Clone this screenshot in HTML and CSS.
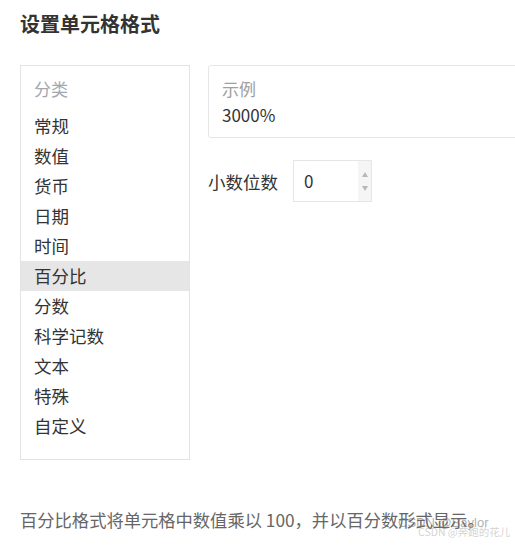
FILE: index.html
```html
<!DOCTYPE html>
<html lang="zh-CN">
<head>
<meta charset="utf-8">
<title>设置单元格格式</title>
<link rel="stylesheet" href="styles.css">
</head>
<body>
<div class="page">
  <h1 class="title">设置单元格格式</h1>
  <div class="main">
    <div class="category">
      <div class="category-label">分类</div>
      <ul class="category-list">
        <li class="item">常规</li>
        <li class="item">数值</li>
        <li class="item">货币</li>
        <li class="item">日期</li>
        <li class="item">时间</li>
        <li class="item selected">百分比</li>
        <li class="item">分数</li>
        <li class="item">科学记数</li>
        <li class="item">文本</li>
        <li class="item">特殊</li>
        <li class="item">自定义</li>
      </ul>
    </div>
    <div class="detail">
      <div class="sample">
        <div class="sample-label">示例</div>
        <div class="sample-value">3000%</div>
      </div>
      <div class="decimal-row">
        <span class="decimal-label">小数位数</span>
        <div class="spin-input">
          <span class="spin-value">0</span>
          <div class="spin-buttons">
            <span class="spin-up"></span>
            <span class="spin-down"></span>
          </div>
        </div>
      </div>
    </div>
  </div>
  <p class="description">百分比格式将单元格中数值乘以 100，并以百分数形式显示。</p>
  <div class="watermark">
    <span class="wm-a">CSDN @Baylor</span>
    <span class="wm-b">CSDN @奔跑的花儿</span>
  </div>
</div>
</body>
</html>
```

FILE: styles.css
```css
html, body {
  margin: 0;
  padding: 0;
  background: #fff;
  overflow: hidden;
}
body {
  font-family: "Noto Sans CJK SC", "Noto Sans", sans-serif;
  color: #333;
  width: 515px;
  height: 545px;
}
.page {
  position: relative;
  padding: 12px 0 0 20px;
  height: 545px;
  box-sizing: border-box;
}
.title {
  margin: 0;
  font-size: 20px;
  line-height: 24px;
  font-weight: bold;
  color: #333;
}
.main {
  display: flex;
  margin-top: 29px;
}
.category {
  width: 170px;
  height: 395px;
  box-sizing: border-box;
  border: 1px solid #e3e3e3;
  padding-top: 8px;
  flex: none;
}
.category-label {
  height: 30px;
  line-height: 30px;
  padding-left: 13px;
  font-size: 17px;
  color: #a3a8b0;
  margin-bottom: 7px;
}
.category-list {
  list-style: none;
  margin: 0;
  padding: 0;
}
.item {
  height: 30px;
  line-height: 30px;
  padding-left: 13px;
  font-size: 17.5px;
  color: #333;
}
.item.selected {
  background: #e6e6e6;
}
.detail {
  margin-left: 18px;
  flex: none;
}
.sample {
  width: 340px;
  box-sizing: border-box;
  border: 1px solid #e6e6e6;
  border-radius: 3px;
  padding: 10px 13px 9px;
}
.sample-label {
  font-size: 17px;
  line-height: 26px;
  color: #a0a0a0;
}
.sample-value {
  font-size: 17px;
  line-height: 26px;
  color: #333;
}
.decimal-row {
  display: flex;
  align-items: center;
  margin-top: 22px;
}
.decimal-label {
  font-size: 17.5px;
  color: #333;
  width: 85px;
}
.spin-input {
  display: flex;
  width: 79px;
  height: 42px;
  box-sizing: border-box;
  border: 1px solid #e6e6e6;
}
.spin-value {
  flex: 1;
  padding-left: 10px;
  line-height: 40px;
  font-size: 17px;
  color: #333;
}
.spin-buttons {
  width: 13px;
  background: #f5f5f5;
  display: flex;
  flex-direction: column;
  align-items: center;
  justify-content: center;
  gap: 9px;
}
.spin-up {
  width: 0;
  height: 0;
  border-left: 3px solid transparent;
  border-right: 3px solid transparent;
  border-bottom: 5px solid #b8b8b8;
}
.spin-down {
  width: 0;
  height: 0;
  border-left: 3px solid transparent;
  border-right: 3px solid transparent;
  border-top: 5px solid #b8b8b8;
}
.description {
  margin: 47px 0 0;
  font-size: 17.3px;
  line-height: 26px;
  color: #666;
  white-space: nowrap;
}
.watermark {
  position: absolute;
  left: 398px;
  top: 515px;
  width: 115px;
  height: 30px;
  pointer-events: none;
}
.wm-a {
  position: absolute;
  left: 0;
  top: 0;
  font-family: "Liberation Sans", sans-serif;
  font-size: 13px;
  color: rgba(120, 120, 120, 0.6);
  white-space: nowrap;
}
.wm-b {
  position: absolute;
  left: 20px;
  top: 9px;
  font-size: 10.5px;
  color: rgba(180, 180, 180, 0.6);
  white-space: nowrap;
}
```
